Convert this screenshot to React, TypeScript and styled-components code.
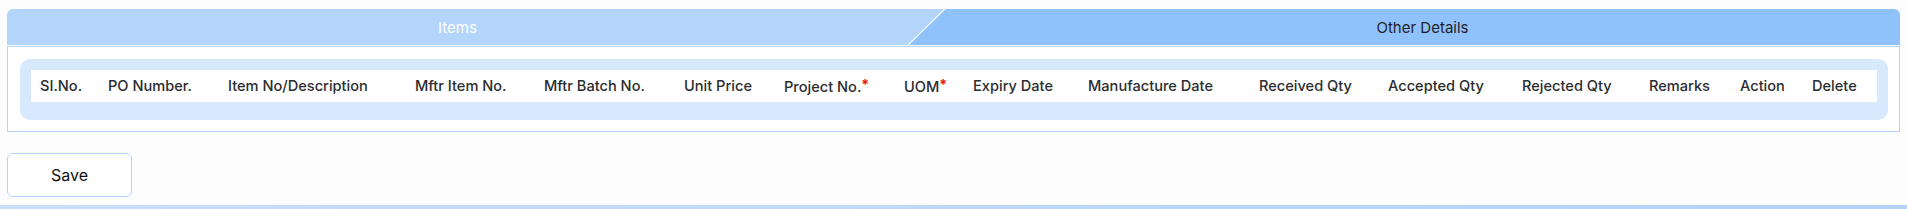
import { FC } from "react";
import styled, { createGlobalStyle } from "styled-components";

const GlobalStyle = createGlobalStyle`
  html, body {
    margin: 0;
    padding: 0;
    background: #fdfdfe;
    font-family: Inter, "Noto Sans", "Liberation Sans", sans-serif;
  }
`;

type Column = { label: string; width: number; required?: boolean };

const columns: Column[] = [
  { label: "SI.No.", width: 68 },
  { label: "PO Number.", width: 120 },
  { label: "Item No/Description", width: 187 },
  { label: "Mftr Item No.", width: 129 },
  { label: "Mftr Batch No.", width: 140 },
  { label: "Unit Price", width: 100 },
  { label: "Project No.", width: 120, required: true },
  { label: "UOM", width: 69, required: true },
  { label: "Expiry Date", width: 115 },
  { label: "Manufacture Date", width: 171 },
  { label: "Received Qty", width: 129 },
  { label: "Accepted Qty", width: 134 },
  { label: "Rejected Qty", width: 127 },
  { label: "Remarks", width: 91 },
  { label: "Action", width: 72 },
  { label: "Delete", width: 74 },
];

const Page = styled.div`
  padding: 9px 7px 0;
`;

const TabBar = styled.div`
  display: flex;
  height: 36px;
  margin-bottom: 1px;
  border-radius: 6px 6px 0 0;
  overflow: hidden;
  font-size: 15px;
`;

const Tab = styled.div<{ $active?: boolean }>`
  display: flex;
  align-items: center;
  justify-content: center;
  background: ${({ $active }) => ($active ? "#8fc1fb" : "#b3d5fc")};
  color: ${({ $active }) => ($active ? "#1f2329" : "#ffffff")};
  flex: ${({ $active }) => ($active ? "1" : "0 0 901px")};
  box-sizing: border-box;
  cursor: pointer;
`;

const Slant = styled.svg`
  display: block;
  flex: 0 0 37px;
  height: 36px;
`;

const Panel = styled.div`
  border: 1px solid #b3d5fc;
  background: #ffffff;
  padding: 12px 11px 11px 12px;
`;

const TableWrap = styled.div`
  background: #d7e9fd;
  border-radius: 10px;
  padding: 11px 11px 18px;
`;

const Table = styled.table`
  width: 100%;
  table-layout: fixed;
  border-collapse: collapse;
  background: #ffffff;
`;

const Th = styled.th`
  height: 32px;
  padding: 0 0 0 9px;
  text-align: left;
  font-size: 14.6px;
  font-weight: 500;
  color: #2b2d31;
  white-space: nowrap;
`;

const Star = styled.span`
  color: #e8141b;
  font-size: 14px;
  font-weight: 700;
  vertical-align: 2px;
`;

const SaveButton = styled.button`
  display: block;
  margin-top: 21px;
  width: 125px;
  height: 44px;
  border: 1px solid #b3d5fc;
  border-radius: 6px;
  background: #ffffff;
  font-family: Inter, "Liberation Sans", sans-serif;
  font-size: 16px;
  color: #111111;
  cursor: pointer;
`;

const BottomStrip = styled.div`
  margin-top: 8px;
  height: 4px;
  background: linear-gradient(90deg, #c9def7 0%, #bcd8f8 60%, #b3d3fa 100%);
`;

const App: FC = () => {
  return (
    <>
      <GlobalStyle />
      <Page>
        <TabBar>
          <Tab>Items</Tab>
          <Slant viewBox="0 0 37 36" preserveAspectRatio="none">
            <rect width="37" height="36" fill="#b3d5fc" />
            <polygon points="37,0 37,36 0,36" fill="#8fc1fb" />
            <line x1="0" y1="36" x2="37" y2="0" stroke="#ffffff" strokeWidth="1.2" />
          </Slant>
          <Tab $active>Other Details</Tab>
        </TabBar>
        <Panel>
          <TableWrap>
            <Table>
              <colgroup>
                {columns.map((c) => (
                  <col key={c.label} style={{ width: c.width }} />
                ))}
              </colgroup>
              <thead>
                <tr>
                  {columns.map((c) => (
                    <Th key={c.label}>
                      {c.label}
                      {c.required && <Star>*</Star>}
                    </Th>
                  ))}
                </tr>
              </thead>
            </Table>
          </TableWrap>
        </Panel>
        <SaveButton>Save</SaveButton>
      </Page>
      <BottomStrip />
    </>
  );
};

export default App;
